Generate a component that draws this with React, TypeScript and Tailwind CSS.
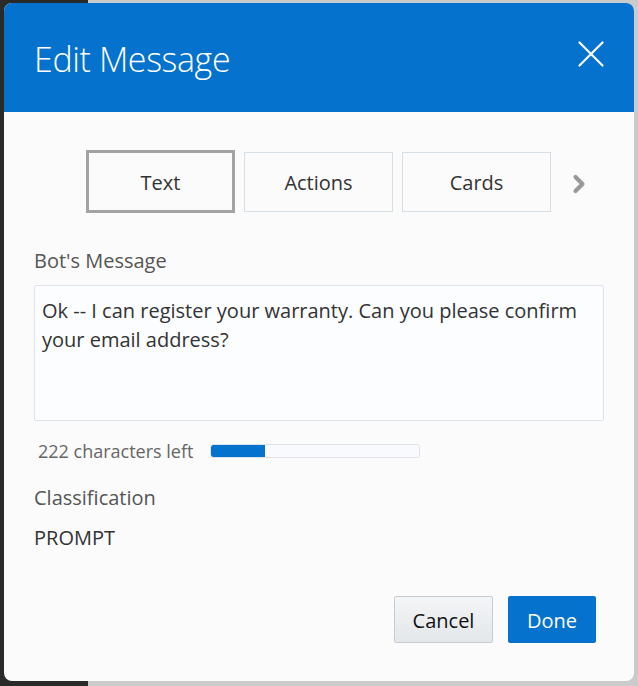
import { ChevronRight, X } from "lucide-react";

const tabs = ["Text", "Actions", "Cards"];

const App = () => {
  const active = "Text";

  return (
    <div
      className="w-[638px] h-[686px] bg-[linear-gradient(to_right,#2a2a2a_88px,#cbcbcb_88px)] pt-[3px] px-[4px] pb-[5px]"
      style={{ fontFamily: "'Open Sans', 'Noto Sans', sans-serif" }}
    >
      <div className="h-full flex flex-col rounded-[8px] overflow-hidden bg-[#fbfbfb]">
        <div className="h-[109px] shrink-0 bg-[#0572ce] flex items-center justify-between pl-[30px] pr-[20px]">
          <h1 className="text-white text-[34px] font-light tracking-[-0.4px] pt-[4px]">
            Edit Message
          </h1>
          <X className="size-[46px] text-white mb-[7px]" strokeWidth={1.15} />
        </div>

        <div className="flex-1 flex flex-col px-[30px]">
          <div className="flex items-center mt-[38px] ml-[52px] gap-[9px]">
            {tabs.map((tab) => (
              <button
                key={tab}
                className={
                  tab === active
                    ? "w-[149px] h-[63px] border-[3px] border-[#a3a3a3] text-[20px] text-[#333] pt-[3px]"
                    : "w-[149px] h-[60px] border border-[#d6dee6] text-[20px] text-[#333] pt-[3px]"
                }
              >
                {tab}
              </button>
            ))}
            <ChevronRight className="size-[28px] text-[#9a9a9a] ml-[5px] mt-[4px]" strokeWidth={3.6} />
          </div>

          <label className="mt-[34px] text-[20px] text-[#555] leading-[28px]">Bot's Message</label>
          <div className="mt-[10px] h-[136px] border border-[#dfe3e8] rounded-[2px] bg-[#fcfdff] px-[7px] py-[10px] text-[20px] leading-[29px] text-[#333]">
            Ok -- I can register your warranty. Can you please confirm your email address?
          </div>

          <div className="flex items-center mt-[15px] ml-[4px]">
            <span className="text-[18px] text-[#666] pt-[2px]">222 characters left</span>
            <div className="ml-[17px] w-[210px] h-[14px] border border-[#dfe3e8] rounded-[3px] bg-[#f8fafd] overflow-hidden">
              <div className="h-full w-[54px] bg-[#0572ce] rounded-l-[2px]" />
            </div>
          </div>

          <div className="mt-[19px] text-[20px] text-[#555] leading-[28px]">Classification</div>
          <div className="mt-[12px] text-[20px] text-[#333] leading-[28px]">PROMPT</div>

          <div className="flex justify-end gap-[15px] mt-[44px] mr-[8px]">
            <button className="w-[99px] h-[47px] rounded-[2px] border border-[#c4ccd4] bg-gradient-to-b from-[#f4f5f6] to-[#e3e7ea] text-[20px] text-[#111] pt-[2px]">
              Cancel
            </button>
            <button className="w-[88px] h-[47px] rounded-[2px] bg-[#0572ce] text-[20px] text-white pt-[2px]">
              Done
            </button>
          </div>
        </div>
      </div>
    </div>
  );
};

export default App;
